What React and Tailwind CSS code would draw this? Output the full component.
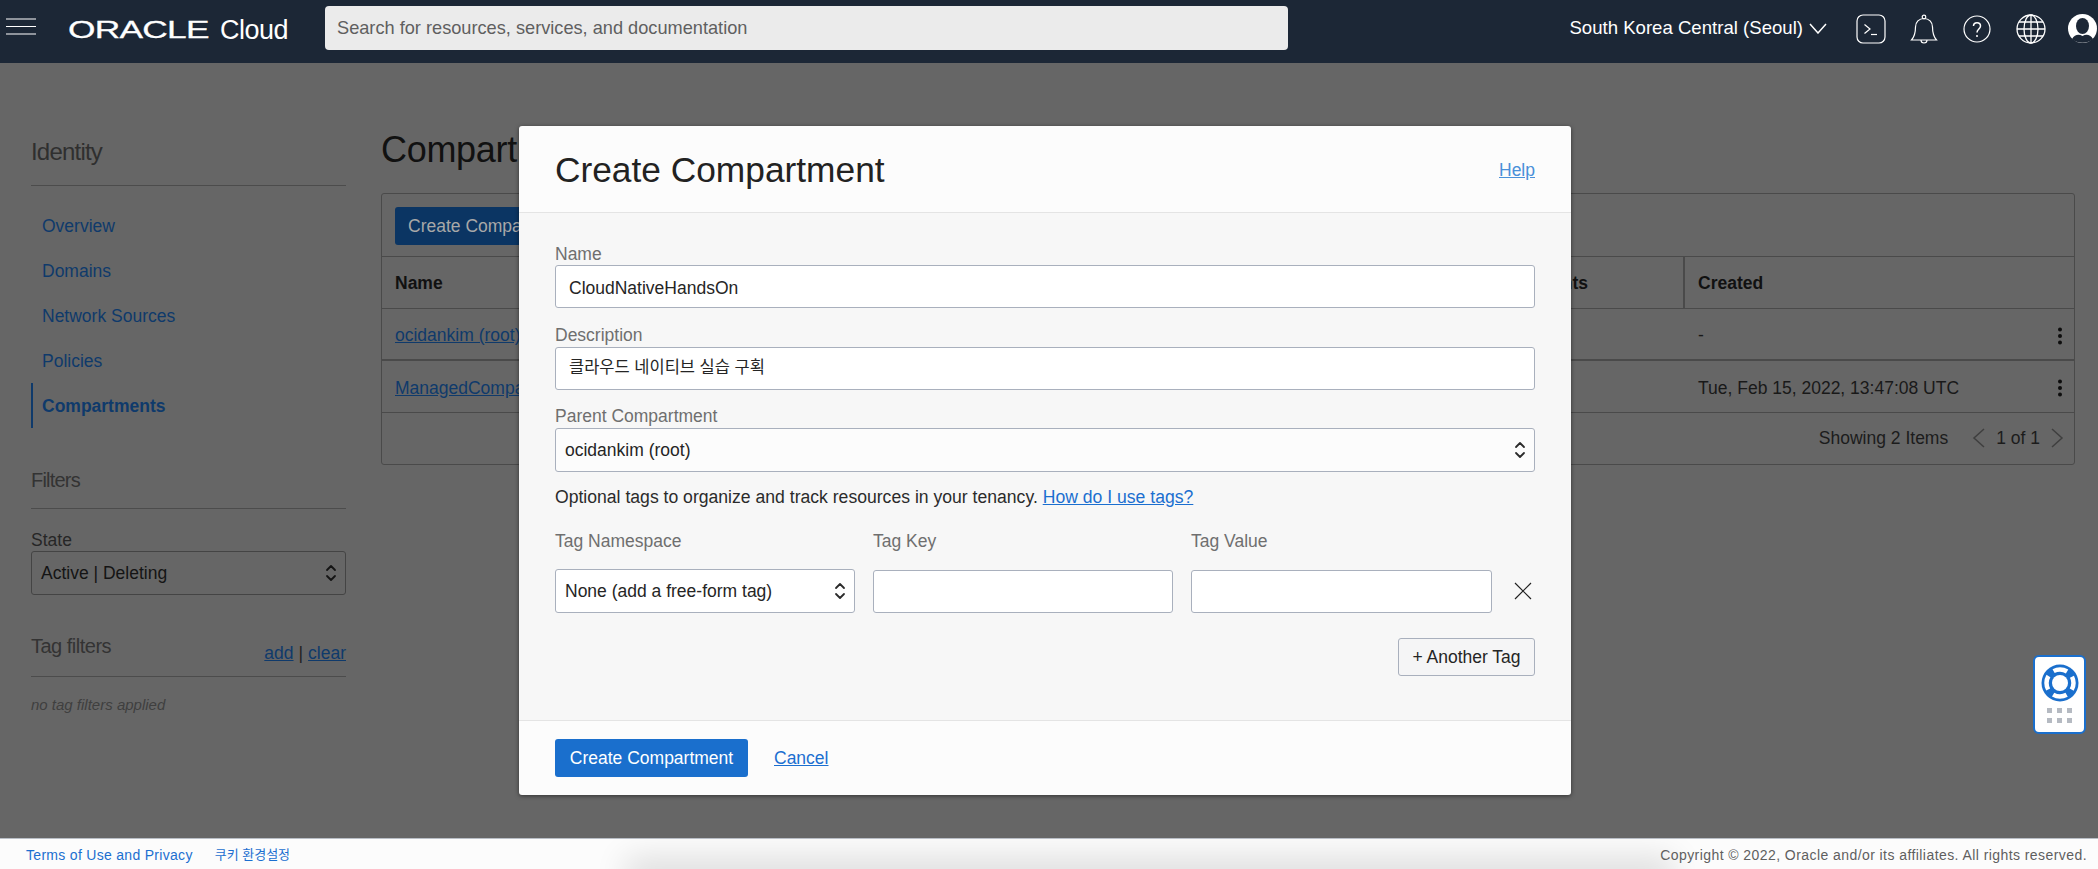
import React from "react";

const font = { fontFamily: '"Liberation Sans", "Noto Sans CJK KR", sans-serif' };

function Arrows({ dark = "#2b2b2b", className = "" }) {
  return (
    <svg width="12" height="20" viewBox="0 0 12 20" className={className} fill="none" stroke={dark} strokeWidth="1.8" strokeLinecap="round" strokeLinejoin="round">
      <path d="M2 7 L6 3 L10 7" />
      <path d="M2 13 L6 17 L10 13" />
    </svg>
  );
}

function Kebab() {
  return (
    <svg width="6" height="18" viewBox="0 0 6 18" fill="#0d0d0d">
      <circle cx="3" cy="2.5" r="2" />
      <circle cx="3" cy="9" r="2" />
      <circle cx="3" cy="15.5" r="2" />
    </svg>
  );
}

function Label({ children, className = "" }) {
  return <div className={`h-[22px] text-[17.5px] text-[#6f6f6f] ${className}`}>{children}</div>;
}

function TextBox({ children, className = "" }) {
  return (
    <div className={`h-[43px] rounded-[3px] border border-[#a9b0bd] bg-white pl-[13px] flex items-center text-[17.5px] text-[#252525] ${className}`}>
      {children}
    </div>
  );
}

function SelectBox({ children, bg = "bg-[#fcfcfc]" }) {
  return (
    <div className={`h-[44px] rounded-[3px] border border-[#a9b0bd] ${bg} pl-[9px] pr-[8px] flex items-center justify-between text-[17.5px] text-[#252525]`}>
      <span>{children}</span>
      <Arrows />
    </div>
  );
}

function SideLink({ children }) {
  return <div className="h-[45px] pl-[11px] pt-px flex items-center text-[17.5px] text-[#0f3a6b]">{children}</div>;
}

function Header() {
  return (
    <header className="h-[63px] shrink-0 bg-[#1c2736] flex items-center pb-[6px] text-white relative z-20">
      <svg width="30" height="18" viewBox="0 0 30 18" className="ml-[6px] -mt-[3px]" stroke="#fff" strokeWidth="1.2">
        <path d="M0 1h30M0 8.5h30M0 16h30" />
      </svg>
      <div className="ml-[32px] w-[143px] h-[24px] flex items-center mt-[3px]">
        <span className="text-[24px] leading-none origin-left scale-x-[1.47] tracking-[-0.5px]" style={{ WebkitTextStroke: "0.3px #fff" }}>ORACLE</span>
      </div>
      <span className="ml-[9px] w-[69px] text-[27px] mt-[4px] font-light tracking-[-0.5px]">Cloud</span>
      <div className="ml-[36px] -mt-[2px] w-[963px] h-[44px] rounded-[4px] bg-[#ebebeb] pl-[12px] pt-[3px] flex items-center text-[18.2px] text-[#5f5f5f]">
        Search for resources, services, and documentation
      </div>
      <div className="ml-auto flex items-center">
        <span className="text-[18.6px] -mt-[2px]">South Korea Central (Seoul)</span>
        <svg width="18" height="11" viewBox="0 0 18 11" fill="none" stroke="#fff" strokeWidth="1.5" className="ml-[6px]">
          <path d="M1 1 L9 10 L17 1" />
        </svg>
        <svg width="30" height="30" viewBox="0 0 30 30" fill="none" stroke="#fff" strokeWidth="1.2" className="ml-[29px]">
          <rect x="1" y="1" width="28" height="28" rx="6" />
          <path d="M8.5 10.5 L14 15 L8.5 19.5" />
          <path d="M15 20.5 H21" />
        </svg>
        <svg width="28" height="30" viewBox="0 0 28 30" fill="none" stroke="#fff" strokeWidth="1.2" className="ml-[24px]">
          <path d="M1.5 26 C5 22 5.5 18 5.5 13 C5.5 8 9 4.5 14 4.5 C19 4.5 22.5 8 22.5 13 C22.5 18 23 22 26.5 26 Z" />
          <circle cx="14" cy="3" r="1.8" />
          <path d="M11 26 C11 30 17 30 17 26" />
        </svg>
        <svg width="28" height="28" viewBox="0 0 28 28" fill="none" stroke="#fff" strokeWidth="1.2" className="ml-[25px]">
          <circle cx="14" cy="14" r="13" />
          <path d="M10.5 11 C10.5 6.5 17.5 6.5 17.5 11 C17.5 14 14 14 14 17.5" strokeWidth="1.5" />
          <circle cx="14" cy="21" r="1" fill="#fff" stroke="none" />
        </svg>
        <svg width="30" height="30" viewBox="0 0 30 30" fill="none" stroke="#fff" strokeWidth="1.3" className="ml-[25px]">
          <circle cx="15" cy="15" r="14" />
          <ellipse cx="15" cy="15" rx="7" ry="14" />
          <path d="M15 1v28M1 15h28M3 8h24M3 22h24" />
        </svg>
        <svg width="29" height="29" viewBox="0 0 29 29" className="ml-[22px] mr-px">
          <circle cx="14.5" cy="14.5" r="14.5" fill="#fff" />
          <ellipse cx="14.5" cy="12" rx="6.5" ry="8" fill="#1c2736" />
          <path d="M4 25 C7 20 11 20 14.5 22 C18 20 22 20 25 25 C20 30 9 30 4 25 Z" fill="#1c2736" />
        </svg>
      </div>
    </header>
  );
}

function Sidebar() {
  return (
    <aside className="w-[315px] shrink-0 ml-[31px] pt-[72px]">
      <div className="h-[51px] border-b border-[#4c4c4c] text-[24px] font-light leading-[34px] text-[#2f2f2f] tracking-[-0.8px]">Identity</div>
      <div className="mt-[17px]">
        <SideLink>Overview</SideLink>
        <SideLink>Domains</SideLink>
        <SideLink>Network Sources</SideLink>
        <SideLink>Policies</SideLink>
        <div className="h-[45px] pl-[9px] pt-px border-l-2 border-[#0f3a6b] flex items-center text-[17.5px] font-bold text-[#0f3a6b]">Compartments</div>
      </div>
      <div className="mt-[36px] h-[45px] border-b border-[#4c4c4c] text-[20px] leading-[32px] text-[#333] tracking-[-0.8px]">Filters</div>
      <div className="mt-[19px] h-[23px] leading-[24px] text-[17.5px] text-[#262626]">State</div>
      <div className="h-[44px] rounded-[3px] border border-[#444] pl-[9px] pr-[8px] flex items-center justify-between text-[17.5px] text-[#141414]">
        <span>Active | Deleting</span>
        <Arrows dark="#141414" />
      </div>
      <div className="mt-[37px] h-[45px] border-b border-[#4c4c4c] flex justify-between">
        <span className="text-[20px] leading-[29px] text-[#333] tracking-[-0.5px]">Tag filters</span>
        <span className="text-[17.5px] leading-[20px] mt-[11px] text-[#0f3a6b]">
          <span className="underline">add</span>
          <span className="mx-[5px] text-[#222]">|</span>
          <span className="underline">clear</span>
        </span>
      </div>
      <div className="mt-[19px] text-[15px] italic leading-[18px] text-[#3f3f3f]">no tag filters applied</div>
    </aside>
  );
}

function Row({ name, created, thick }) {
  return (
    <div className={`h-[52px] flex items-center pt-[3px] pl-[13px] pr-[11px] ${thick ? "border-b-2 border-[#4a4a4a]" : "border-b border-[#4a4a4a]"}`}>
      <span className="w-[1303px] text-[17.5px] text-[#0f3a6b] underline">{name}</span>
      <span className="text-[17.5px] text-[#191919] flex-1">{created}</span>
      <Kebab />
    </div>
  );
}

function Main() {
  return (
    <main className="ml-[35px] w-[1694px] pt-[63px]">
      <h1 className="whitespace-nowrap text-[36px] leading-[48px] font-normal text-[#111] tracking-[-0.3px]">Compartments</h1>
      <div className="mt-[19px] border border-[#4a4a4a] rounded-[3px] h-[272px]">
        <div className="h-[63px] border-b border-[#4a4a4a] pl-[13px] pt-[13px]">
          <div className="w-[240px] h-[38px] rounded-[3px] bg-[#0b3563] pl-[13px] flex items-center text-[17.5px] text-[#a8a8a8]">Create Compartment</div>
        </div>
        <div className="h-[52px] flex items-stretch border-b border-[#4a4a4a] text-[17.5px] font-bold text-[#111]">
          <div className="w-[1303px] border-r-2 border-[#4a4a4a] pl-[13px] pt-px flex items-center justify-between pr-[95px]">
            <span>Name</span>
            <span>Child Compartments</span>
          </div>
          <div className="pl-[13px] pt-px flex items-center">Created</div>
        </div>
        <Row name="ocidankim (root)" created="-" thick />
        <Row name="ManagedCompartmentForPaaS" created="Tue, Feb 15, 2022, 13:47:08 UTC" />
        <div className="h-[50px] flex items-center justify-end pr-[10px] text-[17.5px] text-[#1c1c1c]">
          <span>Showing 2 Items</span>
          <svg width="14" height="20" viewBox="0 0 14 20" fill="none" stroke="#3f3f3f" strokeWidth="1.5" className="ml-[24px]">
            <path d="M12 1 L2 10 L12 19" />
          </svg>
          <span className="mx-[10px]">1 of 1</span>
          <svg width="14" height="20" viewBox="0 0 14 20" fill="none" stroke="#3f3f3f" strokeWidth="1.5">
            <path d="M2 1 L12 10 L2 19" />
          </svg>
        </div>
      </div>
    </main>
  );
}

function Modal() {
  return (
    <div className="absolute left-[519px] top-[63px] w-[1052px] h-[669px] rounded-[3px] overflow-hidden bg-[#fcfcfc] shadow-[0_1px_4px_rgba(0,0,0,0.5)] flex flex-col z-10">
      <div className="h-[87px] shrink-0 border-b border-[#e4e4e4] pl-[36px] pr-[36px] flex items-center justify-between">
        <h2 className="text-[35.3px] font-normal text-[#222] mt-[3px]">Create Compartment</h2>
        <span className="text-[17.5px] text-[#4a90d9] underline font-light mt-[2px]">Help</span>
      </div>
      <div className="flex-1 bg-[#f7f7f7] px-[36px] pt-[30px]">
        <Label className="leading-[22px]">Name</Label>
        <TextBox className="pt-[3px]">CloudNativeHandsOn</TextBox>
        <Label className="mt-[17px] leading-[20px]">Description</Label>
        <TextBox className="pb-[3px]"><span className="text-[16.5px]">클라우드 네이티브 실습 구획</span></TextBox>
        <Label className="mt-[16px] leading-[20px]">Parent Compartment</Label>
        <SelectBox>ocidankim (root)</SelectBox>
        <div className="mt-[14px] h-[22px] leading-[22px] text-[17.6px] text-[#2b2b2b]">
          Optional tags to organize and track resources in your tenancy. <span className="text-[#1b6fd0] underline">How do I use tags?</span>
        </div>
        <div className="mt-[22px] grid grid-cols-[300px_300px_301px_1fr] gap-x-[18px] gap-y-[17px] items-center">
          <Label className="leading-[22px]">Tag Namespace</Label>
          <Label className="leading-[22px]">Tag Key</Label>
          <Label className="leading-[22px]">Tag Value</Label>
          <div />
          <SelectBox bg="bg-white">None (add a free-form tag)</SelectBox>
          <TextBox />
          <TextBox />
          <svg width="18" height="18" viewBox="0 0 18 18" fill="none" stroke="#222" strokeWidth="1.2" className="ml-[4px]">
            <path d="M1 1 L17 17 M17 1 L1 17" />
          </svg>
        </div>
        <div className="mt-[25px] flex justify-end">
          <div className="w-[137px] h-[38px] rounded-[3px] border border-[#a9b0bd] bg-[#f5f5f6] flex items-center justify-center text-[17.5px] text-[#252525]">+ Another Tag</div>
        </div>
      </div>
      <div className="h-[75px] shrink-0 border-t border-[#e4e4e4] pl-[36px] flex items-center">
        <div className="w-[193px] h-[38px] rounded-[3px] bg-[#1a6fcd] flex items-center justify-center text-[17.5px] text-white">Create Compartment</div>
        <span className="ml-[26px] text-[17.5px] text-[#1b6fd0] underline">Cancel</span>
      </div>
    </div>
  );
}

export default function App() {
  return (
    <div className="w-[2098px] h-[869px] flex flex-col overflow-hidden bg-[#666666]" style={font}>
      <Header />
      <div className="relative flex-1 flex overflow-hidden">
        <Sidebar />
        <Main />
        <Modal />
        <div className="absolute left-[2033px] top-[592px] w-[53px] h-[79px] rounded-[6px] border-2 border-[#1a6fcd] bg-white flex flex-col items-center pt-[7px] z-10">
          <svg width="38" height="38" viewBox="0 0 38 38">
            <circle cx="19" cy="19" r="18.5" fill="#1a6fcd" />
            <circle cx="19" cy="19" r="13.5" fill="none" stroke="#fff" strokeWidth="4.5" strokeDasharray="14.1 7.1" strokeDashoffset="7.05" />
            <circle cx="19" cy="19" r="8" fill="#fff" />
          </svg>
          <div className="mt-[6px] grid grid-cols-3 gap-x-[5px] gap-y-[5px]">
            {[0, 1, 2, 3, 4, 5].map((i) => (
              <div key={i} className="w-[5px] h-[5px] bg-[#b5bac2]" />
            ))}
          </div>
        </div>
      </div>
      <footer className="relative h-[31px] shrink-0 overflow-hidden bg-[#fcfcfc] border-t border-[#b9bec6] pl-[26px] pr-[11px] pt-[2px] flex items-center justify-between text-[14px] tracking-[0.3px]">
        <div className="absolute left-[640px] w-[1020px] top-[32px] h-[10px] shadow-[0_0_32px_14px_rgba(0,0,0,0.12)]" />
        <div className="relative flex items-center text-[#1b6fd0]">
          <span>Terms of Use and Privacy</span>
          <span className="ml-[22px] text-[13px] tracking-normal">쿠키 환경설정</span>
        </div>
        <span className="relative text-[#5f5f5f] tracking-[0.43px]">Copyright © 2022, Oracle and/or its affiliates. All rights reserved.</span>
      </footer>
    </div>
  );
}
